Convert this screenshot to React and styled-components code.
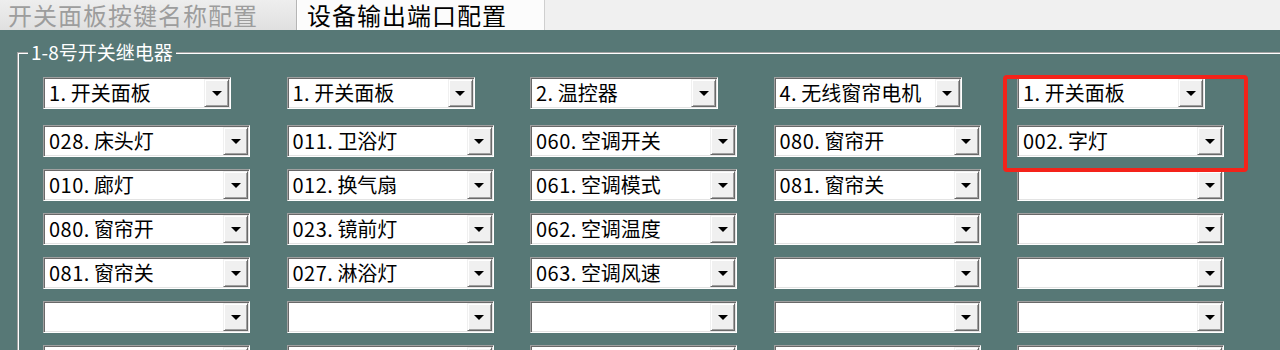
import React from "react";
import styled, { createGlobalStyle } from "styled-components";

const GlobalStyle = createGlobalStyle`
  html, body {
    margin: 0;
    padding: 0;
    background: #577876;
  }
  * {
    box-sizing: border-box;
  }
`;

const Screen = styled.div`
  position: relative;
  width: 1280px;
  height: 350px;
  overflow: hidden;
  display: flex;
  flex-direction: column;
  font-family: "Noto Sans CJK SC", "Noto Sans", sans-serif;
`;

const TabStrip = styled.div`
  height: 30px;
  display: flex;
  background: #f0f0f0;
  flex-shrink: 0;
`;

const Tab = styled.div`
  width: ${(p) => p.$w}px;
  height: 30px;
  padding-left: ${(p) => p.$pl}px;
  display: flex;
  align-items: center;
  font-size: 24px;
  letter-spacing: 1px;
  line-height: 26px;
  white-space: nowrap;
  color: ${(p) => (p.$active ? "#000" : "#9d9d9d")};
  background: ${(p) =>
    p.$active ? "#fcfcfc" : "linear-gradient(#eeeeee, #e0e0e0)"};
  border-right: 1px solid ${(p) => (p.$active ? "#cfcfcf" : "#b5b5b5")};
  box-shadow: ${(p) => (p.$active ? "inset 1px 0 0 #fff" : "none")};
`;

const Panel = styled.div`
  flex: 1;
  background: #577876;
  padding: 22px 0 0 17px;
`;

const Group = styled.div`
  position: relative;
  border-top: 1px solid #a3a3a3;
  border-left: 1px solid #a3a3a3;
  box-shadow: inset 1px 1px 0 #ffffff;
  padding: 24px 0 0 25px;
  height: 400px;
`;

const Legend = styled.span`
  position: absolute;
  top: -13px;
  left: 10px;
  padding: 0 3px;
  background: #577876;
  color: #ffffff;
  font-size: 19px;
  line-height: 24px;
`;

const Rows = styled.div`
  display: flex;
  flex-direction: column;
  gap: 12px;
`;

const Row = styled.div`
  display: grid;
  grid-template-columns: repeat(5, 207px);
  column-gap: 36.5px;
  margin-bottom: ${(p) => (p.$first ? 4 : 0)}px;
`;

const ComboBox = styled.div`
  width: ${(p) => p.$w}px;
  height: 32px;
  display: flex;
  padding: 1px;
  background: #ffffff;
  border: 1px solid;
  border-color: #a0a0a0 #ffffff #ffffff #a0a0a0;
  box-shadow: inset 1px 1px 0 #696969, inset -1px -1px 0 #e3e3e3;
`;

const Value = styled.div`
  flex: 1;
  min-width: 0;
  padding-left: 4px;
  font-size: 20px;
  line-height: 28px;
  color: #000;
  white-space: nowrap;
  overflow: hidden;
`;

const Num = styled.span`
  letter-spacing: 0.5px;
  margin-right: 4px;
`;

const DropButton = styled.div`
  width: 25px;
  height: 28px;
  flex-shrink: 0;
  display: flex;
  align-items: center;
  justify-content: center;
  background: #f0f0f0;
  border: 1px solid;
  border-color: #f0f0f0 #696969 #696969 #f0f0f0;
  box-shadow: inset 1px 1px 0 #ffffff, inset -1px -1px 0 #a0a0a0;
`;

const Marker = styled.div`
  position: absolute;
  left: 1003px;
  top: 75px;
  width: 245px;
  height: 97px;
  border: 4px solid #f4231a;
  border-radius: 4px;
  pointer-events: none;
`;

const Arrow = () => (
  <svg width="10" height="5" viewBox="0 0 10 5">
    <polygon points="0,0 10,0 5,5" fill="#000" />
  </svg>
);

function Combo({ value, width }) {
  const dot = value.indexOf(".");
  return (
    <ComboBox $w={width}>
      <Value>
        {dot >= 0 && <Num>{value.slice(0, dot + 1)}</Num>}
        {value.slice(dot + 1)}
      </Value>
      <DropButton>
        <Arrow />
      </DropButton>
    </ComboBox>
  );
}

const rows = [
  ["1.开关面板", "1.开关面板", "2.温控器", "4.无线窗帘电机", "1.开关面板"],
  ["028.床头灯", "011.卫浴灯", "060.空调开关", "080.窗帘开", "002.字灯"],
  ["010.廊灯", "012.换气扇", "061.空调模式", "081.窗帘关", ""],
  ["080.窗帘开", "023.镜前灯", "062.空调温度", "", ""],
  ["081.窗帘关", "027.淋浴灯", "063.空调风速", "", ""],
  ["", "", "", "", ""],
  ["", "", "", "", ""],
];

export default function App() {
  return (
    <>
      <GlobalStyle />
      <Screen>
        <TabStrip>
          <Tab $w={297} $pl={8}>
            开关面板按键名称配置
          </Tab>
          <Tab $w={248} $pl={10} $active>
            设备输出端口配置
          </Tab>
        </TabStrip>
        <Panel>
          <Group>
            <Legend>1-8号开关继电器</Legend>
            <Rows>
              {rows.map((cells, r) => (
                <Row key={r} $first={r === 0}>
                  {cells.map((v, c) => (
                    <Combo key={c} value={v} width={r === 0 ? 188 : 207} />
                  ))}
                </Row>
              ))}
            </Rows>
          </Group>
        </Panel>
        <Marker />
      </Screen>
    </>
  );
}
